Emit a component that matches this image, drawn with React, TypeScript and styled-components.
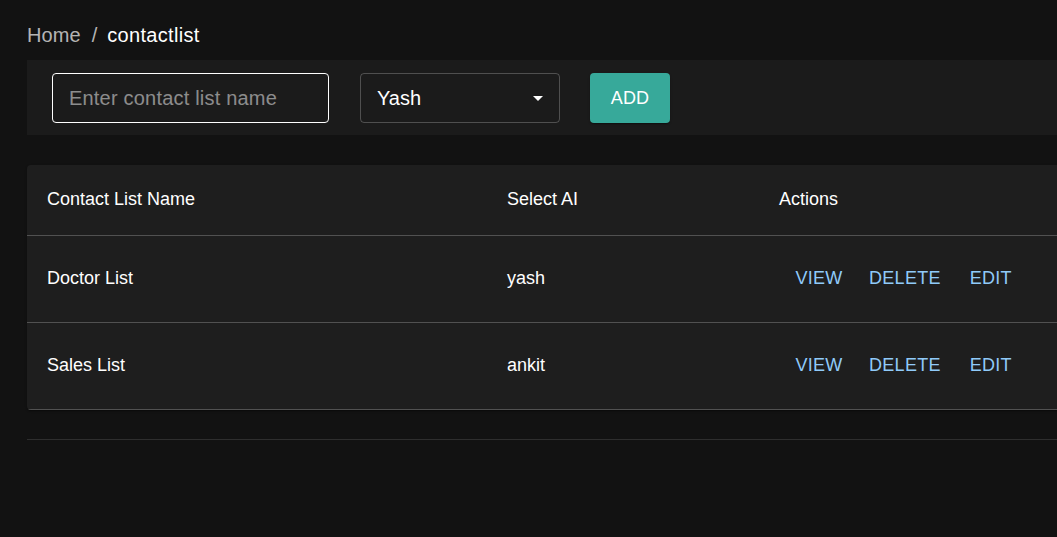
import React from "react";
import styled, { createGlobalStyle } from "styled-components";

const Global = createGlobalStyle`
  html, body {
    margin: 0;
    padding: 0;
    background: #121212;
    color: #fff;
    font-family: "Liberation Sans", Arial, sans-serif;
    overflow: hidden;
  }
  * { box-sizing: border-box; }
`;

const Page = styled.div`
  width: 1120px;
  padding: 24px 0 0 27px;
  min-height: 537px;
`;

const Crumbs = styled.nav`
  display: flex;
  align-items: center;
  font-size: 20px;
  line-height: 23px;
`;

const Crumb = styled.span<{ $current?: boolean }>`
  color: ${(p) => (p.$current ? "#fff" : "rgba(255,255,255,0.7)")};
  letter-spacing: ${(p) => (p.$current ? "0.3px" : "0.1px")};
`;

const Sep = styled.span`
  color: rgba(255, 255, 255, 0.7);
  margin: 0 10px 0 11px;
`;

const Toolbar = styled.div`
  margin-top: 13px;
  background: #1b1b1b;
  height: 75px;
  padding: 13px 0 0 25px;
  display: flex;
  align-items: flex-start;
  gap: 31px;
`;

const TextInput = styled.input`
  width: 277px;
  height: 50px;
  background: transparent;
  border: 1px solid #fff;
  border-radius: 4px;
  padding: 0 16px;
  font-family: "Liberation Sans", Arial, sans-serif;
  font-size: 20px;
  letter-spacing: 0.2px;
  color: #fff;
  outline: none;
  &::placeholder {
    color: rgba(255, 255, 255, 0.5);
  }
`;

const SelectBox = styled.div`
  width: 200px;
  height: 50px;
  border: 1px solid rgba(255, 255, 255, 0.23);
  border-radius: 4px;
  padding: 0 16px;
  display: flex;
  align-items: center;
  justify-content: space-between;
  font-size: 20px;
  color: #fff;
`;

const AddButton = styled.button`
  width: 80px;
  height: 50px;
  margin-left: -1px;
  border: none;
  border-radius: 4px;
  background: #37a99a;
  color: #fff;
  font-family: "Liberation Sans", Arial, sans-serif;
  font-size: 18px;
  letter-spacing: 0.2px;
  box-shadow: 0 2px 1px -1px rgba(0,0,0,0.2), 0 1px 1px rgba(0,0,0,0.14), 0 1px 3px rgba(0,0,0,0.12);
`;

const Card = styled.div`
  margin-top: 30px;
  background: #1e1e1e;
  border-radius: 4px;
  box-shadow: 0 2px 1px -1px rgba(0,0,0,0.2), 0 1px 1px rgba(0,0,0,0.14), 0 1px 3px rgba(0,0,0,0.12);
  overflow: hidden;
`;

const Table = styled.table`
  width: 100%;
  border-collapse: collapse;
  font-size: 18px;
  color: #fff;
`;

const Th = styled.th<{ $w?: number }>`
  text-align: left;
  font-weight: 400;
  height: 70px;
  padding: 0 20px;
  border-bottom: 1px solid #515151;
  width: ${(p) => (p.$w ? `${p.$w}px` : "auto")};
`;

const Td = styled.td`
  height: 87px;
  padding: 0 20px;
  border-bottom: 1px solid #515151;
`;

const Actions = styled.div`
  display: flex;
  align-items: center;
  gap: 10px;
  margin-left: 8px;
`;

const TextButton = styled.button`
  min-width: 64px;
  padding: 6px 8px;
  background: transparent;
  border: none;
  color: #90caf9;
  font-family: "Liberation Sans", Arial, sans-serif;
  font-size: 18px;
  letter-spacing: 0.3px;
  text-transform: uppercase;
`;

const Footer = styled.div`
  margin-top: 29px;
  border-top: 1px solid #2e2e2e;
`;

const rows = [
  { name: "Doctor List", ai: "yash" },
  { name: "Sales List", ai: "ankit" },
];

export default function App() {
  return (
    <>
      <Global />
      <Page>
        <Crumbs>
          <Crumb>Home</Crumb>
          <Sep>/</Sep>
          <Crumb $current>contactlist</Crumb>
        </Crumbs>
        <Toolbar>
          <TextInput placeholder="Enter contact list name" />
          <SelectBox>
            <span>Yash</span>
            <svg width="24" height="24" viewBox="0 0 24 24" style={{ marginRight: -7 }}>
              <path d="M7 10l5 5 5-5z" fill="#fff" />
            </svg>
          </SelectBox>
          <AddButton>ADD</AddButton>
        </Toolbar>
        <Card>
          <Table>
            <thead>
              <tr>
                <Th $w={460}>Contact List Name</Th>
                <Th $w={272}>Select AI</Th>
                <Th>Actions</Th>
              </tr>
            </thead>
            <tbody>
              {rows.map((r) => (
                <tr key={r.name}>
                  <Td>{r.name}</Td>
                  <Td>{r.ai}</Td>
                  <Td>
                    <Actions>
                      <TextButton>View</TextButton>
                      <TextButton>Delete</TextButton>
                      <TextButton>Edit</TextButton>
                    </Actions>
                  </Td>
                </tr>
              ))}
            </tbody>
          </Table>
        </Card>
        <Footer />
      </Page>
    </>
  );
}
